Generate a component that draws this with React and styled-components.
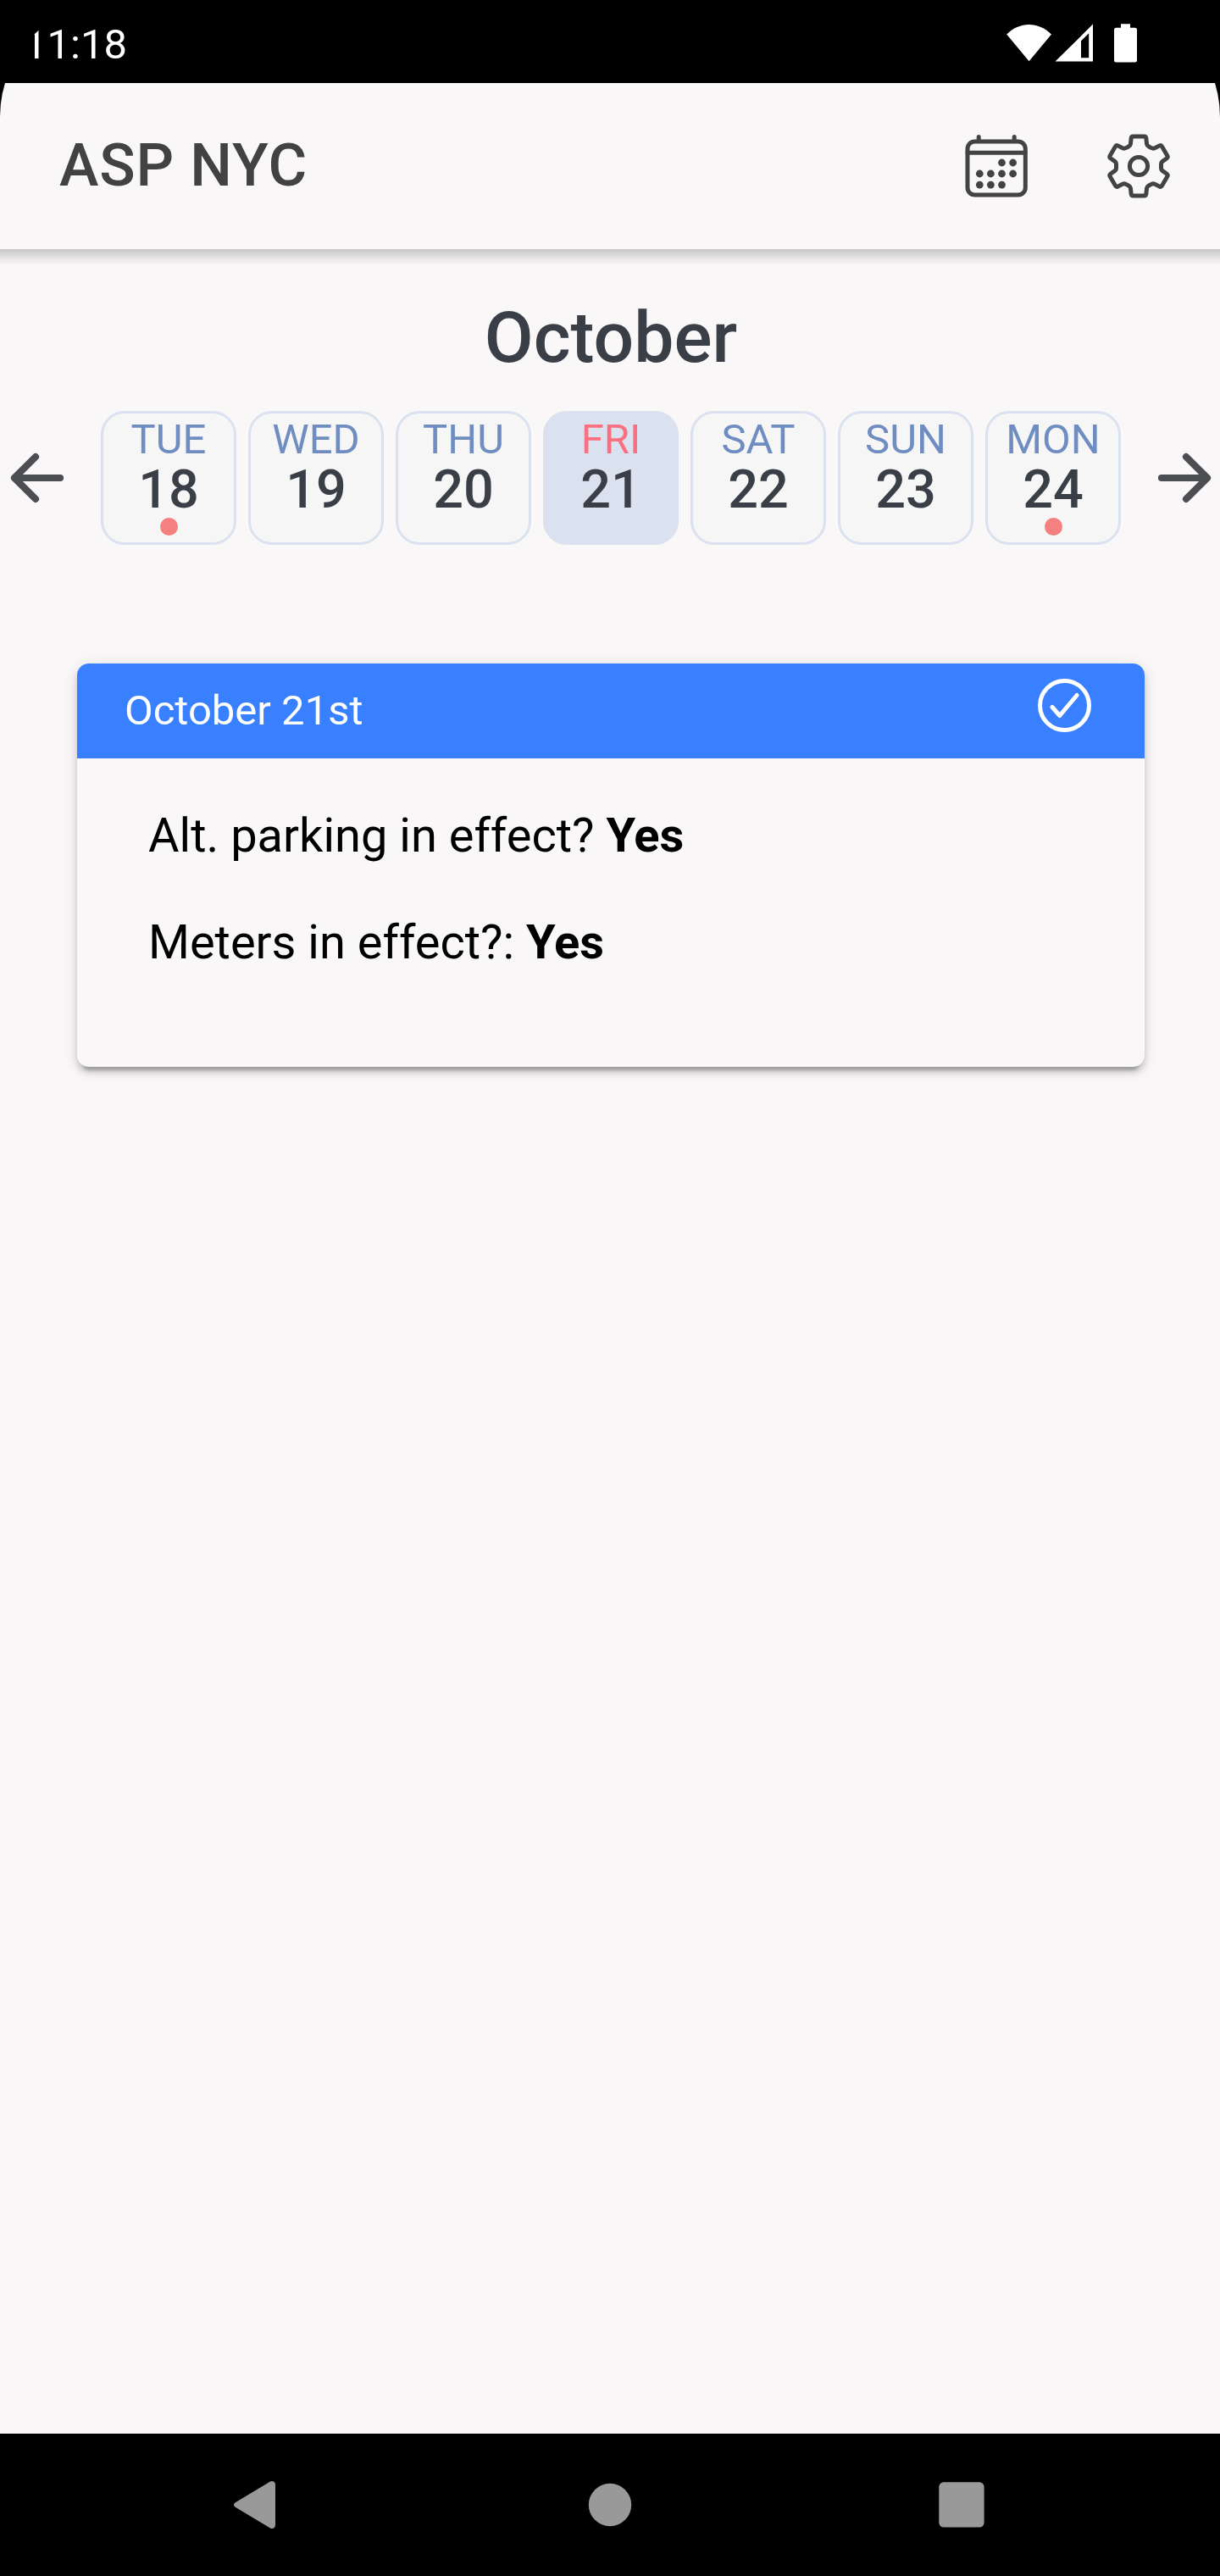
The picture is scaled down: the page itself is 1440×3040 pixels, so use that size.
import React from 'react';
import styled, { createGlobalStyle } from 'styled-components';

const Global = createGlobalStyle`
  * { box-sizing: border-box; }
  html, body { margin: 0; background: #000; }
  body { font-family: Roboto, "Liberation Sans", sans-serif; }
`;

const Screen = styled.div`
  width: 1440px;
  height: 3040px;
  display: flex;
  flex-direction: column;
  background: #000;
  border-radius: 138px 138px 0 0;
  overflow: hidden;
`;

const StatusBar = styled.div`
  height: 98px;
  flex: none;
  display: flex;
  justify-content: space-between;
  align-items: flex-start;
  background: #000;
  color: #fff;
  padding: 0 96px 0 28px;
`;

const Clock = styled.span`
  font-size: 49px;
  line-height: 58px;
  padding-top: 24px;
`;

const StatusIcons = styled.svg`
  display: block;
  width: 160px;
  height: 98px;
`;

const AppBar = styled.header`
  position: relative;
  height: 196px;
  flex: none;
  display: flex;
  align-items: center;
  justify-content: space-between;
  padding: 0 52px 0 70px;
  background: #f9f7f8;

  &::after {
    content: "";
    position: absolute;
    top: 100%;
    left: 0;
    right: 0;
    height: 18px;
    background: linear-gradient(
      rgba(0, 0, 0, 0.2),
      rgba(0, 0, 0, 0.13) 35%,
      rgba(0, 0, 0, 0.05) 70%,
      rgba(0, 0, 0, 0.015)
    );
  }
`;

const Title = styled.h1`
  margin: 0 0 2px;
  font-size: 70px;
  line-height: 82px;
  font-weight: 500;
  letter-spacing: 0.0125em;
  color: #424242;
`;

const Actions = styled.div`
  display: flex;
  gap: 80px;
`;

const IconButton = styled.button`
  width: 88px;
  height: 88px;
  padding: 0;
  border: 0;
  background: none;
  color: #434343;
`;

const Icon = styled.svg`
  display: block;
  width: 100%;
  height: 100%;
  fill: none;
  stroke: currentColor;
  stroke-linecap: round;
  stroke-linejoin: round;
`;

const Content = styled.main`
  flex: 1;
  display: flex;
  flex-direction: column;
  padding-top: 56px;
  background: #f9f7f8;
`;

const Month = styled.h2`
  margin: 0;
  padding-left: 2px;
  font-size: 84px;
  line-height: 98px;
  font-weight: 500;
  text-align: center;
  color: #3a3e47;
`;

const Week = styled.div`
  display: flex;
  align-items: center;
  justify-content: space-between;
  margin-top: 37px;
  padding: 0 2px;
`;

const ArrowButton = styled.button`
  width: 84px;
  height: 84px;
  padding: 0;
  border: 0;
  background: none;
  color: #4d4e51;
`;

const Days = styled.div`
  display: flex;
  gap: 14px;
  padding-left: 2px;
`;

const Day = styled.div`
  width: 160px;
  height: 158px;
  display: flex;
  flex-direction: column;
  align-items: center;
  padding-top: 2px;
  border: 3px solid #dae1ef;
  border-radius: 28px;
  background: ${(p) => (p.$selected ? '#dae1ef' : '#f6f6f6')};
`;

const Weekday = styled.span`
  font-size: 49px;
  line-height: 58px;
  color: ${(p) => (p.$selected ? '#fa7080' : '#6f8dc1')};
`;

const DayNumber = styled.span`
  font-size: 63px;
  line-height: 60px;
  font-weight: 500;
  color: #3a3e47;
`;

const Dot = styled.span`
  width: 21px;
  height: 21px;
  margin-top: 3px;
  border-radius: 50%;
  background: #f48080;
`;

const Card = styled.section`
  height: 476px;
  margin: 140px 89px 0 91px;
  border-radius: 14px;
  background: #f9f7f8;
  box-shadow:
    0 10.5px 3.5px -7px rgba(0, 0, 0, 0.2),
    0 7px 7px rgba(0, 0, 0, 0.14),
    0 3.5px 17.5px rgba(0, 0, 0, 0.12);
`;

const CardHeader = styled.div`
  height: 112px;
  display: flex;
  justify-content: space-between;
  padding: 0 56px;
  border-radius: 14px 14px 0 0;
  background: #3880ff;
  color: #fff;
`;

const CardTitle = styled.span`
  font-size: 49px;
  line-height: 58px;
  padding-top: 27px;
`;

const CheckIcon = styled(Icon)`
  width: 77px;
  height: 77px;
  margin-top: 11px;
`;

const CardBody = styled.div`
  display: flex;
  flex-direction: column;
  gap: 60px;
  padding: 58px 84px;
`;

const Line = styled.p`
  margin: 0;
  font-size: 56px;
  line-height: 66px;
  color: #000;
`;

const NavBar = styled.nav`
  height: 168px;
  flex: none;
  background: #000;
`;

const days = [
  { name: 'TUE', date: 18, dot: true },
  { name: 'WED', date: 19 },
  { name: 'THU', date: 20 },
  { name: 'FRI', date: 21, selected: true },
  { name: 'SAT', date: 22 },
  { name: 'SUN', date: 23 },
  { name: 'MON', date: 24, dot: true },
];

const calendarDots = [
  [1182.5, 192], [1195.6, 192],
  [1156.3, 205], [1169.4, 205], [1182.5, 205], [1195.6, 205],
  [1156.3, 218.1], [1169.4, 218.1], [1182.5, 218.1],
];

function CalendarIcon() {
  return (
    <Icon viewBox="1132 152 88 88" strokeWidth="5">
      <rect x="1142" y="167" width="68.3" height="63" rx="8.5" />
      <path d="M1142 180.3H1210" />
      <path d="M1155.2 161.6V166M1197.2 161.6V166" />
      <g fill="currentColor" stroke="none">
        {calendarDots.map(([x, y]) => (
          <circle key={`${x}-${y}`} cx={x} cy={y} r="4.4" />
        ))}
      </g>
    </Icon>
  );
}

function GearIcon() {
  return (
    <Icon viewBox="1300 152 88 88" strokeWidth="5">
      <circle cx="1344" cy="196" r="10.6" />
      <path d="M1337.6 161H1350.4Q1352.6 161 1352.8 163L1353.6 170Q1354 172 1356 173L1359 174.6Q1361 175.6 1363 174.8L1368.6 171.9Q1370.6 171 1371.6 173L1377.8 183.8Q1378.9 185.7 1377 187L1371.8 190.6Q1370.3 191.8 1370.5 193.8V198.2Q1370.3 200.2 1371.8 201.4L1377 205Q1378.9 206.3 1377.8 208.2L1371.6 219Q1370.6 221 1368.6 220.1L1363 217.2Q1361 216.4 1359 217.4L1356 219Q1354 220 1353.6 222L1352.8 229Q1352.6 231 1350.4 231H1337.6Q1335.4 231 1335.2 229L1334.4 222Q1334 220 1332 219L1329 217.4Q1327 216.4 1325 217.2L1319.4 220.1Q1317.4 221 1316.4 219L1310.2 208.2Q1309.1 206.3 1311 205L1316.2 201.4Q1317.7 200.2 1317.5 198.2V193.8Q1317.7 191.8 1316.2 190.6L1311 187Q1309.1 185.7 1310.2 183.8L1316.4 173Q1317.4 171 1319.4 171.9L1325 174.8Q1327 175.6 1329 174.6L1332 173Q1334 172 1334.4 170L1335.2 163Q1335.4 161 1337.6 161Z" />
    </Icon>
  );
}

export default function App() {
  return (
    <>
      <Global />
      <Screen>
        <StatusBar>
          <Clock>11:18</Clock>
          <StatusIcons viewBox="1184 0 160 98" fill="#fff">
            <path d="M1188.2 40.5C1203 25 1226 25 1241 40.5L1214.6 72.3Z" />
            <path fillRule="evenodd" d="M1245.5 72.6L1290 28.6V72.6ZM1276 48.3V68.2H1285.2V39.3Z" />
            <path d="M1323 28.2H1334V32.8H1339.6Q1342 32.8 1342 35.2V71.2Q1342 73.6 1339.6 73.6H1317.4Q1315 73.6 1315 71.2V35.2Q1315 32.8 1317.4 32.8H1323Z" />
          </StatusIcons>
        </StatusBar>
        <AppBar>
          <Title>ASP NYC</Title>
          <Actions>
            <IconButton aria-label="Calendar"><CalendarIcon /></IconButton>
            <IconButton aria-label="Settings"><GearIcon /></IconButton>
          </Actions>
        </AppBar>
        <Content>
          <Month>October</Month>
          <Week>
            <ArrowButton aria-label="Previous">
              <Icon viewBox="2 522 84 84" strokeWidth="8.2">
                <path d="M42 539.2L17 564L42 588.8M17 564H71" />
              </Icon>
            </ArrowButton>
            <Days>
              {days.map((d) => (
                <Day key={d.date} $selected={d.selected}>
                  <Weekday $selected={d.selected}>{d.name}</Weekday>
                  <DayNumber>{d.date}</DayNumber>
                  {d.dot && <Dot />}
                </Day>
              ))}
            </Days>
            <ArrowButton aria-label="Next">
              <Icon viewBox="1354 522 84 84" strokeWidth="8.2">
                <path d="M1400 539.2L1425 564L1400 588.8M1425 564H1371" />
              </Icon>
            </ArrowButton>
          </Week>
          <Card>
            <CardHeader>
              <CardTitle>October 21st</CardTitle>
              <CheckIcon viewBox="1218 794 77 77" strokeWidth="5">
                <circle cx="1256.5" cy="832.5" r="29" />
                <path d="M1242 834.5L1250.8 844.5L1271 820.5" />
              </CheckIcon>
            </CardHeader>
            <CardBody>
              <Line>Alt. parking in effect? <b>Yes</b></Line>
              <Line>Meters in effect?: <b>Yes</b></Line>
            </CardBody>
          </Card>
        </Content>
        <NavBar>
          <svg width="1440" height="168" viewBox="0 2872 1440 168" fill="#999">
            <path d="M277.8 2953.2L319 2928.6Q321 2927.4 323 2928.6Q325 2929.8 325 2932V2980Q325 2982.2 323 2983.4Q321 2984.6 319 2983.4L277.8 2958.8Q276 2957.6 276 2956Q276 2954.4 277.8 2953.2Z" />
            <circle cx="720" cy="2956" r="25.2" />
            <rect x="1108.3" y="2929.3" width="53.3" height="53.3" rx="5.5" />
          </svg>
        </NavBar>
      </Screen>
    </>
  );
}
